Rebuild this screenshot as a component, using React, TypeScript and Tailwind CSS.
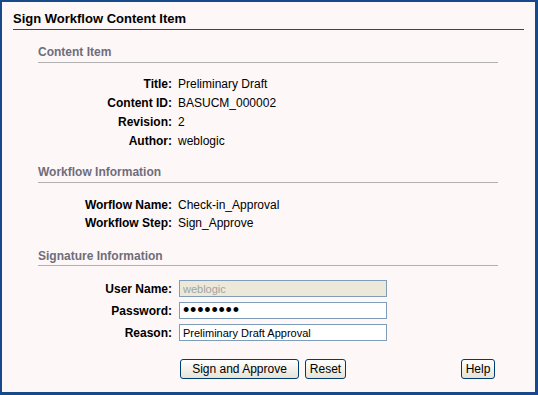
import React from "react";

const font = { fontFamily: '"Liberation Sans", Arial, sans-serif' };

function SectionHeader({ title, className }: { title: string; className: string }) {
  return (
    <div
      className={`ml-[36px] mr-[37px] border-b border-[#b2b0b0] text-[12px] font-bold leading-[14px] text-[#6e6d7c] ${className}`}
    >
      {title}
    </div>
  );
}

function Row({ label, value, h }: { label: string; value: string; h: string }) {
  return (
    <div className={`flex ${h} items-center`}>
      <div className="w-[170px] text-right font-bold">{label}</div>
      <div className="pl-[6px]">{value}</div>
    </div>
  );
}

function Field({ label, children }: { label: string; children: React.ReactNode }) {
  return (
    <div className="flex h-[17px] items-center">
      <div className="w-[170px] text-right font-bold">{label}</div>
      <div className="pl-[7px]">{children}</div>
    </div>
  );
}

const inputCls =
  "block h-[17px] w-[208px] border border-[#7f9db9] px-[3px] outline-none";

const btnCls =
  "flex h-[20px] items-center justify-center rounded-[3px] border border-[#003c74] bg-gradient-to-b from-white to-[#e6e3d6] text-[12px] text-black";

export default function App() {
  return (
    <div
      style={font}
      className="h-[395px] w-[538px] border-b-[3px] border-l-2 border-r-[3px] border-t-2 border-[#17498b] bg-[#fef7f7] text-[12px] text-black"
    >
      <div className="mx-[11px] border-b border-[#1c4b87] pb-[2px] pt-[9px] text-[13px] font-bold leading-[16px]">
        Sign Workflow Content Item
      </div>

      <SectionHeader title="Content Item" className="mt-[15px] pb-[3px]" />
      <div className="mt-[11px]">
        <Row label="Title:" value="Preliminary Draft" h="h-[19px]" />
        <Row label="Content ID:" value="BASUCM_000002" h="h-[19px]" />
        <Row label="Revision:" value="2" h="h-[19px]" />
        <Row label="Author:" value="weblogic" h="h-[19px]" />
      </div>

      <SectionHeader title="Workflow Information" className="mt-[15px] pb-[3px]" />
      <div className="mt-[13px]">
        <Row label="Worflow Name:" value="Check-in_Approval" h="h-[18px]" />
        <Row label="Workflow Step:" value="Sign_Approve" h="h-[18px]" />
      </div>

      <SectionHeader title="Signature Information" className="mt-[17px] pb-[2px]" />
      <div className="mt-[14px] flex flex-col gap-[5px]">
        <Field label="User Name:">
          <input
            className={`${inputCls} bg-[#ece9d8] text-[11px] leading-[15px] text-[#a3a3a3]`}
            defaultValue="weblogic"
            disabled
            style={font}
          />
        </Field>
        <Field label="Password:">
          <input
            type="password"
            className={`${inputCls} bg-white text-[18px] leading-[15px] tracking-[0.8px] text-black`}
            defaultValue="weblogic"
            style={font}
          />
        </Field>
        <Field label="Reason:">
          <input
            className={`${inputCls} bg-white text-[11px] leading-[15px] text-black`}
            defaultValue="Preliminary Draft Approval"
            style={font}
          />
        </Field>
      </div>

      <div className="mt-[18px] flex pl-[178px] pr-[40px]">
        <button type="button" className={`${btnCls} w-[119px]`} style={font}>
          Sign and Approve
        </button>
        <button type="button" className={`${btnCls} ml-[6px] w-[41px]`} style={font}>
          Reset
        </button>
        <div className="flex-1" />
        <button type="button" className={`${btnCls} w-[34px]`} style={font}>
          Help
        </button>
      </div>
    </div>
  );
}
